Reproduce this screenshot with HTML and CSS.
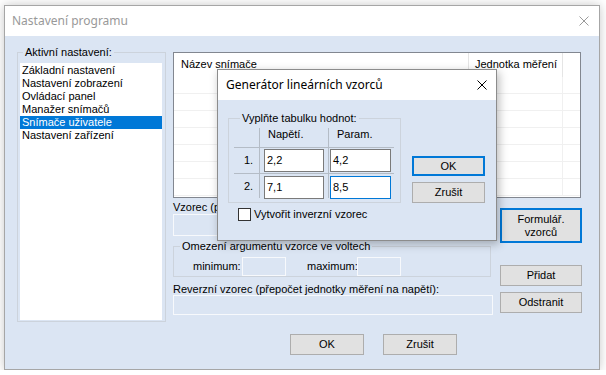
FILE: index.html
```html
<!DOCTYPE html>
<html lang="cs">
<head>
    <meta charset="UTF-8">
    <meta name="viewport" content="width=device-width, initial-scale=1.0">
    <title>Nastavení programu</title>
    <link rel="stylesheet" href="styles.css">
</head>
<body>
    <div class="window">
        <div class="titlebar">
            <span class="title inactive">Nastavení programu</span>
            <svg class="close" width="10" height="10" viewBox="0 0 10 10"><path d="M0.5 0.5L9.5 9.5M9.5 0.5L0.5 9.5" stroke="#9a9a9a" stroke-width="1"/></svg>
        </div>
        <div class="client">
            <div class="main">
                <fieldset class="group group-left">
                    <legend class="legend-left">Aktivní nastavení:</legend>
                    <ul class="listbox">
                        <li>Základní nastavení</li>
                        <li>Nastavení zobrazení</li>
                        <li>Ovládací panel</li>
                        <li>Manažer snímačů</li>
                        <li class="selected">Snímače uživatele</li>
                        <li>Nastavení zařízení</li>
                    </ul>
                </fieldset>
                <div class="right">
                    <div class="listview">
                        <div class="lv-head">
                            <div class="lv-col c1">Název snímače</div>
                            <div class="lv-col c2">Jednotka měření</div>
                            <div class="lv-col c3"></div>
                        </div>
                        <div class="lv-row"><span class="lv-cell"></span></div>
                        <div class="lv-row"><span class="lv-cell"></span></div>
                        <div class="lv-row"><span class="lv-cell"></span></div>
                        <div class="lv-row"><span class="lv-cell"></span></div>
                        <div class="lv-row"><span class="lv-cell"></span></div>
                        <div class="lv-row"><span class="lv-cell"></span></div>
                        <div class="lv-row"><span class="lv-cell"></span></div>
                    </div>
                    <div class="lower">
                        <div class="fields">
                            <div class="label">Vzorec (přepočet napětí na jednotku měření):</div>
                            <div class="textbox tall"></div>
                            <fieldset class="group limits">
                                <legend>Omezení argumentu vzorce ve voltech</legend>
                                <div class="limit-row">
                                    <span class="lim-label min">minimum:</span>
                                    <div class="textbox small"></div>
                                    <span class="lim-label max">maximum:</span>
                                    <div class="textbox small"></div>
                                </div>
                            </fieldset>
                            <div class="label label-rev">Reverzní vzorec (přepočet jednotky měření na napětí):</div>
                            <div class="textbox rev"></div>
                        </div>
                        <div class="side">
                            <button class="btn default formular">Formulář.<br>vzorců</button>
                            <button class="btn pridat">Přidat</button>
                            <button class="btn odstranit">Odstranit</button>
                        </div>
                    </div>
                </div>
            </div>
            <div class="footer">
                <button class="btn foot">OK</button>
                <button class="btn foot">Zrušit</button>
            </div>
        </div>

        <div class="dialog">
            <div class="titlebar dlg-titlebar">
                <span class="title">Generátor lineárních vzorců</span>
                <svg class="close" width="10" height="10" viewBox="0 0 10 10"><path d="M0.5 0.5L9.5 9.5M9.5 0.5L0.5 9.5" stroke="#000" stroke-width="1"/></svg>
            </div>
            <div class="dlg-body">
                <div class="dlg-left">
                    <fieldset class="group values">
                        <legend>Vyplňte tabulku hodnot:</legend>
                        <div class="vtable">
                            <div class="vh"></div>
                            <div class="vh line">Napětí.</div>
                            <div class="vh line">Param.</div>

                            <div class="vc r1 num">1.</div>
                            <div class="vc r1 line"><div class="vinput w1">2,2</div></div>
                            <div class="vc r1 line"><div class="vinput w2">4,2</div></div>

                            <div class="vc r2 num">2.</div>
                            <div class="vc r2 line"><div class="vinput w1">7,1</div></div>
                            <div class="vc r2 line"><div class="vinput w2 focus">8,5</div></div>
                        </div>
                    </fieldset>
                    <div class="check-row">
                        <span class="checkbox"></span>
                        <span class="check-label">Vytvořit inverzní vzorec</span>
                    </div>
                </div>
                <div class="dlg-buttons">
                    <button class="btn default dlg-ok">OK</button>
                    <button class="btn dlg-cancel">Zrušit</button>
                </div>
            </div>
        </div>
    </div>
</body>
</html>
```

FILE: styles.css
```css
body {
    margin: 0;
    background-color: #ffffff;
    font-family: "Liberation Sans", Arial, sans-serif;
    font-size: 11px;
    line-height: 13px;
    color: #000;
}
.window {
    position: relative;
    margin: 5px 0 0 4px;
    width: 596px;
    height: 365px;
    box-sizing: border-box;
    border: 1px solid #a6a6a6;
    background-color: #fff;
    box-shadow: 0 0 10px rgba(0, 0, 0, 0.22);
}
.titlebar {
    height: 30px;
    display: flex;
    align-items: center;
    justify-content: space-between;
    padding: 0 10px 0 7px;
    background-color: #fff;
}
.title {
    font-family: "Noto Sans", sans-serif;
    font-size: 12px;
    line-height: 16px;
}
.title.inactive {
    color: #999;
}
.close {
    display: block;
}
.client {
    height: 333px;
    box-sizing: border-box;
    padding: 10px 0 0 12px;
    background-color: #dbe5f3;
}
.main {
    display: flex;
    align-items: flex-start;
    gap: 7px;
}
.group {
    margin: 0;
    padding: 0;
    border: 1px solid #ccd3dc;
    min-width: 0;
}
.group legend {
    padding: 0 2px;
    margin-left: 6px;
    line-height: 13px;
}
.group-left {
    width: 149px;
    box-sizing: border-box;
}
.group-left .legend-left {
    margin-left: 5px;
}
.listbox {
    list-style: none;
    margin: 4px 3px 1px 2px;
    padding: 1px 0 0 0;
    height: 257px;
    box-sizing: border-box;
    background-color: #fff;
}
.listbox li {
    height: 13px;
    padding-left: 2px;
    white-space: nowrap;
}
.listbox li.selected {
    background-color: #0078d7;
    color: #fff;
}
.right {
    width: 409px;
    margin-top: 6px;
}
.listview {
    width: 408px;
    height: 146px;
    box-sizing: border-box;
    border: 1px solid #828790;
    background-color: #fff;
    overflow: hidden;
}
.lv-head {
    display: flex;
    height: 24px;
}
.lv-col {
    box-sizing: border-box;
    padding-top: 5px;
    white-space: nowrap;
}
.lv-col.c1 {
    width: 295px;
    padding-left: 7px;
    border-right: 1px solid #e5e5e5;
}
.lv-col.c2 {
    width: 94px;
    padding-left: 6px;
    border-right: 1px solid #e5e5e5;
}
.lv-col.c3 {
    flex: 1;
}
.lv-row {
    height: 17px;
    box-sizing: border-box;
    border-bottom: 1px solid #f0f0f0;
}
.lv-cell {
    display: block;
    width: 389px;
    height: 100%;
    box-sizing: border-box;
    border-right: 1px solid #f0f0f0;
}
.lower {
    display: grid;
    grid-template-columns: 320px 82px;
    column-gap: 7px;
}
.label {
    margin-top: 3px;
    white-space: nowrap;
}
.textbox {
    box-sizing: border-box;
    border: 1px solid #f7f9fc;
}
.textbox.tall {
    height: 22px;
}
.limits {
    margin-top: 4px;
    width: 318px;
    box-sizing: border-box;
}
.limit-row {
    display: flex;
    align-items: center;
    padding: 4px 0 0 19px;
}
.lim-label {
    white-space: nowrap;
}
.lim-label.min {
    width: 49px;
}
.lim-label.max {
    width: 50px;
    margin-left: 21px;
}
.textbox.small {
    width: 44px;
    height: 19px;
}
.label-rev {
    margin-top: 6px;
    line-height: 12px;
}
.textbox.rev {
    height: 20px;
}
.btn {
    display: block;
    box-sizing: border-box;
    margin: 0;
    padding: 0;
    border: 1px solid #adadad;
    background-color: #e1e1e1;
    font-family: "Liberation Sans", Arial, sans-serif;
    font-size: 11px;
    line-height: 13px;
    color: #000;
}
.btn.default {
    border: 2px solid #0078d7;
}
.side .btn {
    width: 82px;
}
.formular {
    margin-top: 10px;
    height: 35px;
}
.pridat {
    margin-top: 22px;
    height: 21px;
}
.odstranit {
    margin-top: 6px;
    height: 21px;
}
.footer {
    display: flex;
    gap: 19px;
    margin: 12px 0 0 273px;
}
.btn.foot {
    width: 74px;
    height: 21px;
}
.dialog {
    position: absolute;
    left: 212px;
    top: 63px;
    width: 280px;
    height: 172px;
    box-sizing: border-box;
    border: 1px solid #8c8c8c;
    background-color: #fff;
    box-shadow: 2px 3px 9px rgba(0, 0, 0, 0.28);
}
.dlg-titlebar {
    padding: 0 9px 0 8px;
}
.dlg-body {
    height: 140px;
    box-sizing: border-box;
    display: flex;
    align-items: flex-start;
    padding: 12px 0 0 10px;
    background-color: #dbe5f3;
}
.values {
    width: 173px;
    box-sizing: border-box;
    padding: 0 0 4px 5px;
}
.vtable {
    display: grid;
    grid-template-columns: 25px 69px 66px;
}
.vh {
    margin-top: 3px;
    height: 20px;
    box-sizing: border-box;
    border-bottom: 1px solid #b4bcc6;
    padding-left: 8px;
}
.vc {
    box-sizing: border-box;
}
.vh.line,
.vc.line {
    border-left: 1px solid #b4bcc6;
}
.vc.r1 {
    height: 26px;
    padding-top: 1px;
    border-bottom: 1px solid #b4bcc6;
}
.vc.r2 {
    height: 24px;
    padding-top: 2px;
}
.vc.num {
    padding-left: 10px;
    display: flex;
    align-items: center;
    padding-top: 0;
}
.vinput {
    height: 23px;
    box-sizing: border-box;
    border: 1px solid #7a7a7a;
    background-color: #fff;
    padding: 4px 0 0 2px;
}
.vinput.w1 {
    width: 60px;
    margin-left: 4px;
}
.vinput.w2 {
    width: 61px;
    margin-left: 1px;
}
.vinput.focus {
    border-color: #0078d7;
}
.check-row {
    display: flex;
    align-items: center;
    margin: 5px 0 0 10px;
}
.checkbox {
    width: 13px;
    height: 13px;
    box-sizing: border-box;
    border: 1px solid #333;
    background-color: #fff;
}
.check-label {
    margin-left: 3px;
}
.dlg-buttons {
    margin: 44px 0 0 11px;
}
.dlg-buttons .btn {
    width: 73px;
}
.dlg-ok {
    height: 20px;
}
.dlg-cancel {
    margin-top: 6px;
    height: 21px;
}
```
